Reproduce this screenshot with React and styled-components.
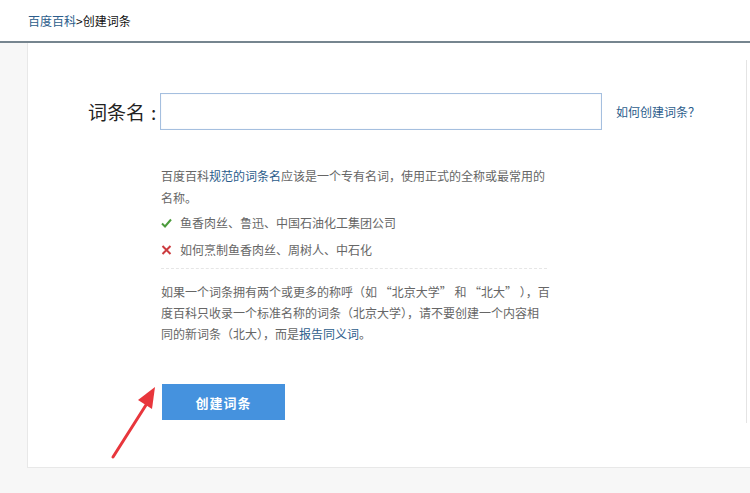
import React from "react";
import styled, { createGlobalStyle } from "styled-components";

const GlobalStyle = createGlobalStyle`
  html, body {
    margin: 0;
    padding: 0;
    background: #f7f7f7;
    font-family: "Noto Sans CJK SC", "Liberation Sans", sans-serif;
    overflow: hidden;
  }
`;

const Header = styled.div`
  height: 41px;
  background: #fff;
  border-bottom: 2px solid #76858f;
  padding-left: 28px;
  display: flex;
  align-items: center;
  font-size: 12px;
  color: #111;
`;

const Crumb = styled.a`
  color: #2c5d8c;
  text-decoration: none;
`;

const Main = styled.div`
  padding-left: 27px;
  display: flex;
  position: relative;
`;

const Card = styled.div`
  flex: 1;
  height: 424px;
  background: #fff;
  border: 1px solid #e8e8e8;
  border-top: none;
  border-right: none;
  display: flex;
`;

const Content = styled.div`
  width: 718px;
  padding-top: 50px;
  box-sizing: border-box;
`;

const Sidebar = styled.div`
  flex: 1;
  margin: 17px 0 44px;
  border-left: 1px solid #e4e4e4;
`;

const FormRow = styled.div`
  display: flex;
  align-items: center;
  padding-left: 60px;
`;

const Label = styled.label`
  width: 72px;
  flex-shrink: 0;
  white-space: nowrap;
  font-size: 19px;
  color: #222;
  line-height: 37px;
`;

const Colon = styled.span`
  margin-left: 6px;
`;

const Input = styled.input`
  width: 442px;
  height: 37px;
  box-sizing: border-box;
  border: 1px solid #a5bfdf;
  box-shadow: inset 0 0 1px #c9d8ea;
  outline: none;
  padding: 0 10px;
  font-size: 14px;
  font-family: inherit;
`;

const HelpLink = styled.a`
  margin-left: 14px;
  font-size: 12px;
  color: #2c5d8c;
  text-decoration: none;
  white-space: nowrap;
`;

const Tips = styled.div`
  margin: 35px 0 0 133px;
  width: 386px;
  font-size: 12px;
  color: #666;
  line-height: 22px;
  white-space: nowrap;
`;

const Para = styled.p`
  margin: 0;
  line-height: ${(p) => p.$lh || 22}px;
`;

const Em = styled.a`
  color: #2c5d8c;
  text-decoration: none;
`;

const Example = styled.div`
  display: flex;
  align-items: center;
  gap: 8px;
  height: 27px;
  line-height: 27px;
`;

const Divider = styled.div`
  border-top: 1px dashed #e6e6e6;
  margin: 5px 0 12px;
`;

const Actions = styled.div`
  margin: 40px 0 0 134px;
`;

const Button = styled.button`
  width: 123px;
  height: 36px;
  border: none;
  background: #4592de;
  color: #fff;
  font-size: 13px;
  font-weight: 700;
  font-family: inherit;
  letter-spacing: 1px;
  cursor: pointer;
`;

const Arrow = styled.svg`
  position: absolute;
  left: 108px;
  top: 340px;
`;

function Check() {
  return (
    <svg width="11" height="10" viewBox="0 0 11 10">
      <path d="M1 5.5 L4 8.5 L10 1.5" fill="none" stroke="#4c9b3c" strokeWidth="2" />
    </svg>
  );
}

function Cross() {
  return (
    <svg width="11" height="10" viewBox="0 0 11 10">
      <path d="M1.5 1 L9.5 9 M9.5 1 L1.5 9" fill="none" stroke="#cc3b3f" strokeWidth="2" />
    </svg>
  );
}

export default function App() {
  return (
    <>
      <GlobalStyle />
      <Header>
        <Crumb href="#">百度百科</Crumb>
        <span>&gt;创建词条</span>
      </Header>
      <Main>
        <Card>
          <Content>
            <FormRow>
              <Label>
                词条名<Colon>:</Colon>
              </Label>
              <Input type="text" />
              <HelpLink href="#">如何创建词条？</HelpLink>
            </FormRow>
            <Tips>
              <Para>
                百度百科<Em href="#">规范的词条名</Em>应该是一个专有名词，使用正式的全称或最常用的
                <br />
                名称。
              </Para>
              <Example>
                <Check />
                鱼香肉丝、鲁迅、中国石油化工集团公司
              </Example>
              <Example>
                <Cross />
                如何烹制鱼香肉丝、周树人、中石化
              </Example>
              <Divider />
              <Para $lh={21}>
                如果一个词条拥有两个或更多的称呼（如 “北京大学” 和 “北大” ），百
                <br />
                度百科只收录一个标准名称的词条（北京大学），请不要创建一个内容相
                <br />
                同的新词条（北大），而是<Em href="#">报告同义词</Em>。
              </Para>
            </Tips>
            <Actions>
              <Button>创建词条</Button>
            </Actions>
          </Content>
          <Sidebar />
        </Card>
        <Arrow width="56" height="78" viewBox="0 0 56 78">
          <path d="M5 74 L38 22" stroke="#e8363c" strokeWidth="3" strokeLinecap="round" />
          <path d="M47 4 L30 17 L44 26 Z" fill="#e8363c" />
        </Arrow>
      </Main>
    </>
  );
}
